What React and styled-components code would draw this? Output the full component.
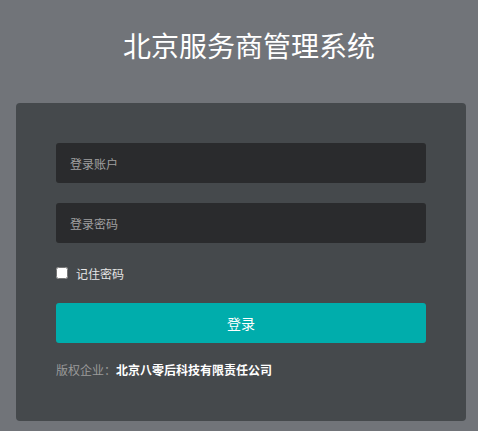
import React from "react";
import styled, { createGlobalStyle } from "styled-components";

const GlobalStyle = createGlobalStyle`
  html, body {
    margin: 0;
    padding: 0;
    background: #717479;
    font-family: "Noto Sans CJK SC", "Microsoft YaHei", sans-serif;
  }
`;

const Page = styled.div`
  width: 478px;
  height: 431px;
  box-sizing: border-box;
  padding: 0 12px 0 16px;
  display: flex;
  flex-direction: column;
`;

const Title = styled.h1`
  margin: 0;
  height: 103px;
  display: flex;
  align-items: center;
  justify-content: center;
  padding-left: 16px;
  padding-bottom: 14px;
  box-sizing: border-box;
  font-size: 28px;
  font-weight: 400;
  color: #ffffff;
`;

const Card = styled.div`
  box-sizing: border-box;
  width: 450px;
  padding: 40px 40px 42px;
  border-radius: 4px;
  background-color: #45494c;
  display: flex;
  flex-direction: column;
`;

const Input = styled.input`
  box-sizing: border-box;
  height: 40px;
  width: 100%;
  margin-bottom: 20px;
  padding: 0 14px;
  border: none;
  outline: none;
  border-radius: 3px;
  background-color: #2a2b2d;
  color: #eee;
  font-family: inherit;
  font-size: 12px;

  &::placeholder {
    color: #a0a0a0;
  }
`;

const Remember = styled.label`
  display: flex;
  align-items: center;
  height: 20px;
  margin-bottom: 20px;
  font-size: 12px;
  color: #e6e6e6;

  input {
    width: 12px;
    height: 12px;
    margin: 0 8px 0 0;
  }
`;

const Button = styled.button`
  height: 40px;
  border: none;
  border-radius: 3px;
  background-color: #00adac;
  color: #ffffff;
  font-family: inherit;
  font-size: 14px;
  cursor: pointer;
`;

const Footer = styled.p`
  margin: 18px 0 0;
  font-size: 12px;
  line-height: 18px;
  color: #9a9a9a;

  strong {
    color: #ffffff;
    font-weight: 700;
  }
`;

const App = () => {
  return (
    <>
      <GlobalStyle />
      <Page>
        <Title>北京服务商管理系统</Title>
        <Card>
          <Input type="text" placeholder="登录账户" />
          <Input type="password" placeholder="登录密码" />
          <Remember>
            <input type="checkbox" />
            记住密码
          </Remember>
          <Button type="submit">登录</Button>
          <Footer>
            版权企业：<strong>北京八零后科技有限责任公司</strong>
          </Footer>
        </Card>
      </Page>
    </>
  );
};

export default App;
